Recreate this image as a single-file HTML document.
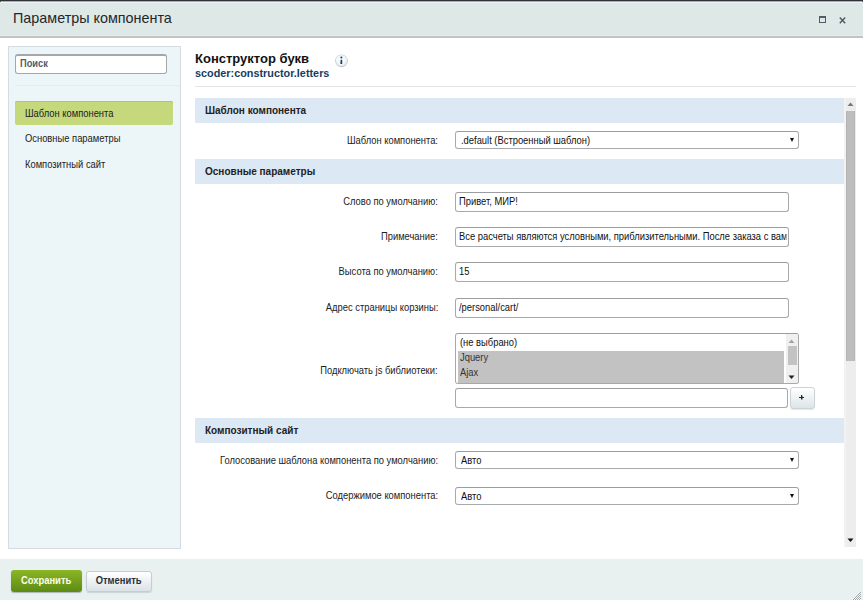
<!DOCTYPE html>
<html><head><meta charset="utf-8">
<style>
*{box-sizing:border-box;margin:0;padding:0}
html,body{width:863px;height:600px;overflow:hidden;background:#303338;font-family:"Liberation Sans",sans-serif}
#dlg{position:absolute;left:0;top:1px;width:863px;height:599px;background:#fff;border-radius:3px 3px 0 0;overflow:hidden}
#head{position:absolute;left:0;top:0;width:863px;height:37px;background:#dee8e7;border-top:1px solid #a9aeb1;border-bottom:2px solid #c1c3c4}
#head:before{content:"";position:absolute;left:0;top:0;width:100%;height:1px;background:#eef4f5}
#head:after{content:"";position:absolute;left:0;bottom:0;width:100%;height:1px;background:#e5eced}
#title{position:absolute;left:13px;top:7px;font-size:15px;color:#23272b;transform:scaleX(0.957);transform-origin:0 0;white-space:nowrap}
.icon{position:absolute;display:block}
.t{display:inline-block;transform:scaleX(0.92);transform-origin:0 0;white-space:nowrap}
#left{position:absolute;left:8px;top:45px;width:173px;height:503px;background:#ecf5f8;border:1px solid #d5dcdf}
#search{position:absolute;left:6px;top:7px;width:152px;height:20px;border:1px solid #a3a7ab;border-top:2px solid #a3a7ab;border-radius:3px;background:#fff;font-size:10px;color:#535c69;font-weight:bold;padding:2px 0 0 4px}
#sep{position:absolute;left:6px;top:38px;width:165px;height:1px;background:#e4ecef}
.nav{position:absolute;left:6px;width:158px;height:24px;font-size:10.2px;color:#1c1c1c;padding:7px 0 0 10px}
.nav.act{background:#c5d97c;border-radius:2px;box-shadow:inset 0 1px 0 #b2c46c;color:#222}
#foot{position:absolute;left:0;top:558px;width:863px;height:41px;background:#e9f1f0}
.btn{position:absolute;top:11px;height:22px;border-radius:3px;font-size:10.5px;font-weight:bold;text-align:center;padding-top:4px;white-space:nowrap}
.btn span{display:inline-block;transform:scaleX(0.895);transform-origin:50% 0}
#save{left:11px;width:71px;background:linear-gradient(#8bb626,#5d8a14);color:#fbfde8;box-shadow:0 1px 1px rgba(0,0,0,0.25)}
#cancel{left:86px;top:12px;height:21px;padding-top:2px;width:66px;background:linear-gradient(#fff,#dbe3e6);color:#2a2f38;border:1px solid #c6ccd0;box-shadow:0 1px 1px rgba(0,0,0,0.12)}
#ctitle{position:absolute;left:195px;top:50px;font-size:13px;font-weight:bold;color:#111}
#csub{position:absolute;left:195px;top:66px;font-size:10.85px;font-weight:bold;color:#173c62}
#hr{position:absolute;left:195px;top:85px;width:661px;height:1px;background:#e2e4e6}
.sec{position:absolute;left:195px;width:649px;height:25px;background:#dce8f4;font-size:10px;font-weight:bold;color:#222;padding:7px 0 0 10px}
.lbl{position:absolute;right:425px;font-size:10.2px;color:#222;text-align:right;white-space:nowrap;transform:scaleX(0.92);transform-origin:100% 0}
.inp{position:absolute;left:455px;width:334px;height:20px;border:1px solid #a8a9aa;border-top-color:#9c9d9e;border-radius:3px;background:#fff;font-size:10.2px;color:#111;padding:3px 0 0 3px;white-space:nowrap;overflow:hidden}
.sel{position:absolute;left:455px;width:344px;height:18px;border:1px solid #a8a9aa;border-top-color:#9c9d9e;border-radius:3px;background:#fff;font-size:10.2px;color:#111;padding:3px 0 0 5px;white-space:nowrap}
.sel:after{content:"";position:absolute;right:4px;top:6px;border-left:2.5px solid transparent;border-right:2.5px solid transparent;border-top:4px solid #111}
#sb{position:absolute;left:844px;top:97px;width:12px;height:449px;background:#ededed;box-shadow:inset 2px 0 0 #f2f2f2}
#sbthumb{position:absolute;left:2px;top:13px;width:9px;height:250px;background:#bdbdbd;box-shadow:inset 1px 0 0 #b4b4b4,inset -1px 0 0 #b4b4b4}
#ms{position:absolute;left:455px;top:332px;width:344px;height:51px;border:1px solid #a8a9aa;border-top-color:#9c9d9e;border-radius:3px;background:#fff;overflow:hidden;font-size:10.2px;color:#111}
#ms .opt{position:absolute;left:2px;width:326px;height:15px;padding:1px 0 0 2px}
#ms .on{background:#c2c2c2;color:#333}
#mssb{position:absolute;left:330px;top:0;width:12px;height:49px;background:#f0f0f0}
#msthumb{position:absolute;left:2px;top:12px;width:9px;height:19px;background:#c3c3c3}
#plus{position:absolute;left:790px;top:386px;width:25px;height:22px;border:1px solid #ccd2d5;border-radius:3px;background:linear-gradient(#fff,#dde5e8);box-shadow:0 1px 1px rgba(0,0,0,0.1)}

</style></head><body>
<div id="dlg">
 <div id="head">
  <div id="title">Параметры компонента</div>
  <svg class="icon" style="left:819px;top:14px" width="7" height="7"><rect x="0.5" y="0.5" width="6" height="6" fill="none" stroke="#525c68"/><rect x="0" y="0" width="7" height="2" fill="#525c68"/></svg>
  <svg class="icon" style="left:839px;top:15px" width="7" height="7"><path d="M0.8 0.6L6.2 6.2M6.2 0.6L0.8 6.2" stroke="#525c68" stroke-width="1.5"/></svg>
 </div>
 <div id="left">
  <div id="search"><span class="t" style="transform:scaleX(0.93)">Поиск</span></div>
  <div id="sep"></div>
  <div class="nav act" style="top:54px"><span class="t">Шаблон компонента</span></div>
  <div class="nav" style="top:79px"><span class="t">Основные параметры</span></div>
  <div class="nav" style="top:105px"><span class="t">Композитный сайт</span></div>
 </div>
 <div id="ctitle">Конструктор букв</div>
 <div id="csub">scoder:constructor.letters</div>
 <svg class="icon" style="left:335px;top:53px" width="14" height="15"><defs><radialGradient id="ig" cx="0.45" cy="0.4" r="0.6"><stop offset="0" stop-color="#ffffff"/><stop offset="0.75" stop-color="#eef4f7"/><stop offset="1" stop-color="#dfe5e9"/></radialGradient></defs><circle cx="6.5" cy="6.9" r="6.3" fill="#bfc5ca"/><circle cx="6.5" cy="6.6" r="5.7" fill="url(#ig)"/><circle cx="6.4" cy="3.5" r="1" fill="#1a3a5e"/><path d="M5.6 5.8H7.2V10.1H5.4Z" fill="#1a3a5e"/></svg>
 <div id="hr"></div>
 <div class="sec" style="top:97px">Шаблон компонента</div>
 <div class="lbl" style="top:134px">Шаблон компонента:</div>
 <div class="sel" style="top:130px"><span class="t">.default (Встроенный шаблон)</span></div>
 <div class="sec" style="top:158px">Основные параметры</div>
 <div class="lbl" style="top:195px">Слово по умолчанию:</div>
 <div class="inp" style="top:191px"><span class="t">Привет, МИР!</span></div>
 <div class="lbl" style="top:230px">Примечание:</div>
 <div class="inp" style="top:226px"><span class="t" style="display:block;width:356px;overflow:hidden">Все расчеты являются условными, приблизительными. После заказа с вами</span></div>
 <div class="lbl" style="top:265px">Высота по умолчанию:</div>
 <div class="inp" style="top:261px"><span class="t">15</span></div>
 <div class="lbl" style="top:301px">Адрес страницы корзины:</div>
 <div class="inp" style="top:297px"><span class="t">/personal/cart/</span></div>
 <div class="lbl" style="top:364px">Подключать js библиотеки:</div>
 <div id="ms">
  <div class="opt" style="top:2px"><span class="t">(не выбрано)</span></div>
  <div class="opt on" style="top:17px"><span class="t">Jquery</span></div>
  <div class="opt on" style="top:32px;height:17px"><span class="t">Ajax</span></div>
  <div id="mssb">
   <svg class="icon" style="left:2px;top:5px" width="7" height="5"><path d="M0.5 4L3.5 0.5L6.5 4Z" fill="#a3a3a3"/></svg>
   <div id="msthumb"></div>
   <svg class="icon" style="left:2px;top:41px" width="7" height="5"><path d="M0.5 0.5L3.5 4L6.5 0.5Z" fill="#222"/></svg>
  </div>
 </div>
 <div class="inp" style="top:387px;width:333px"></div>
 <div id="plus"><svg class="icon" style="left:8px;top:7px" width="6" height="5"><rect x="0" y="2" width="5" height="1" fill="#1c2836"/><rect x="2" y="0" width="1" height="4.5" fill="#1c2836"/><rect x="3" y="0.5" width="1" height="4" fill="#1c2836" opacity="0.45"/></svg></div>
 <div class="sec" style="top:417px">Композитный сайт</div>
 <div class="lbl" style="top:454px">Голосование шаблона компонента по умолчанию:</div>
 <div class="sel" style="top:450px"><span class="t">Авто</span></div>
 <div class="lbl" style="top:489px">Содержимое компонента:</div>
 <div class="sel" style="top:486px"><span class="t">Авто</span></div>
 <div id="sb">
  <svg class="icon" style="left:3px;top:4px" width="7" height="5"><path d="M0.5 4L3.5 0.5L6.5 4Z" fill="#777"/></svg>
  <div id="sbthumb"></div>
  <svg class="icon" style="left:3px;top:440px" width="7" height="5"><path d="M0.5 0.5L3.5 4L6.5 0.5Z" fill="#111"/></svg>
 </div>
 <div id="foot">
  <div class="btn" id="save"><span>Сохранить</span></div>
  <div class="btn" id="cancel"><span>Отменить</span></div>
  <svg id="grip" style="position:absolute;left:853px;top:33px" width="8" height="8"><rect x="7" y="0" width="1" height="1" fill="#a3a7a9"/><rect x="6" y="1" width="1" height="1" fill="#a3a7a9"/><rect x="7" y="1" width="1" height="1" fill="#f6f9f9"/><rect x="5" y="2" width="1" height="1" fill="#a3a7a9"/><rect x="6" y="2" width="1" height="1" fill="#f6f9f9"/><rect x="7" y="2" width="1" height="1" fill="#a3a7a9"/><rect x="4" y="3" width="1" height="1" fill="#a3a7a9"/><rect x="5" y="3" width="1" height="1" fill="#f6f9f9"/><rect x="6" y="3" width="1" height="1" fill="#a3a7a9"/><rect x="7" y="3" width="1" height="1" fill="#f6f9f9"/><rect x="3" y="4" width="1" height="1" fill="#a3a7a9"/><rect x="4" y="4" width="1" height="1" fill="#f6f9f9"/><rect x="5" y="4" width="1" height="1" fill="#a3a7a9"/><rect x="6" y="4" width="1" height="1" fill="#f6f9f9"/><rect x="7" y="4" width="1" height="1" fill="#a3a7a9"/><rect x="2" y="5" width="1" height="1" fill="#a3a7a9"/><rect x="3" y="5" width="1" height="1" fill="#f6f9f9"/><rect x="4" y="5" width="1" height="1" fill="#a3a7a9"/><rect x="5" y="5" width="1" height="1" fill="#f6f9f9"/><rect x="6" y="5" width="1" height="1" fill="#a3a7a9"/><rect x="7" y="5" width="1" height="1" fill="#f6f9f9"/><rect x="1" y="6" width="1" height="1" fill="#a3a7a9"/><rect x="2" y="6" width="1" height="1" fill="#f6f9f9"/><rect x="3" y="6" width="1" height="1" fill="#a3a7a9"/><rect x="4" y="6" width="1" height="1" fill="#f6f9f9"/><rect x="5" y="6" width="1" height="1" fill="#a3a7a9"/><rect x="6" y="6" width="1" height="1" fill="#f6f9f9"/><rect x="7" y="6" width="1" height="1" fill="#a3a7a9"/><rect x="0" y="7" width="1" height="1" fill="#a3a7a9"/><rect x="1" y="7" width="1" height="1" fill="#f6f9f9"/><rect x="2" y="7" width="1" height="1" fill="#a3a7a9"/><rect x="3" y="7" width="1" height="1" fill="#f6f9f9"/><rect x="4" y="7" width="1" height="1" fill="#a3a7a9"/><rect x="5" y="7" width="1" height="1" fill="#f6f9f9"/><rect x="6" y="7" width="1" height="1" fill="#a3a7a9"/><rect x="7" y="7" width="1" height="1" fill="#f6f9f9"/></svg>
 </div>
</div>
</body></html>
